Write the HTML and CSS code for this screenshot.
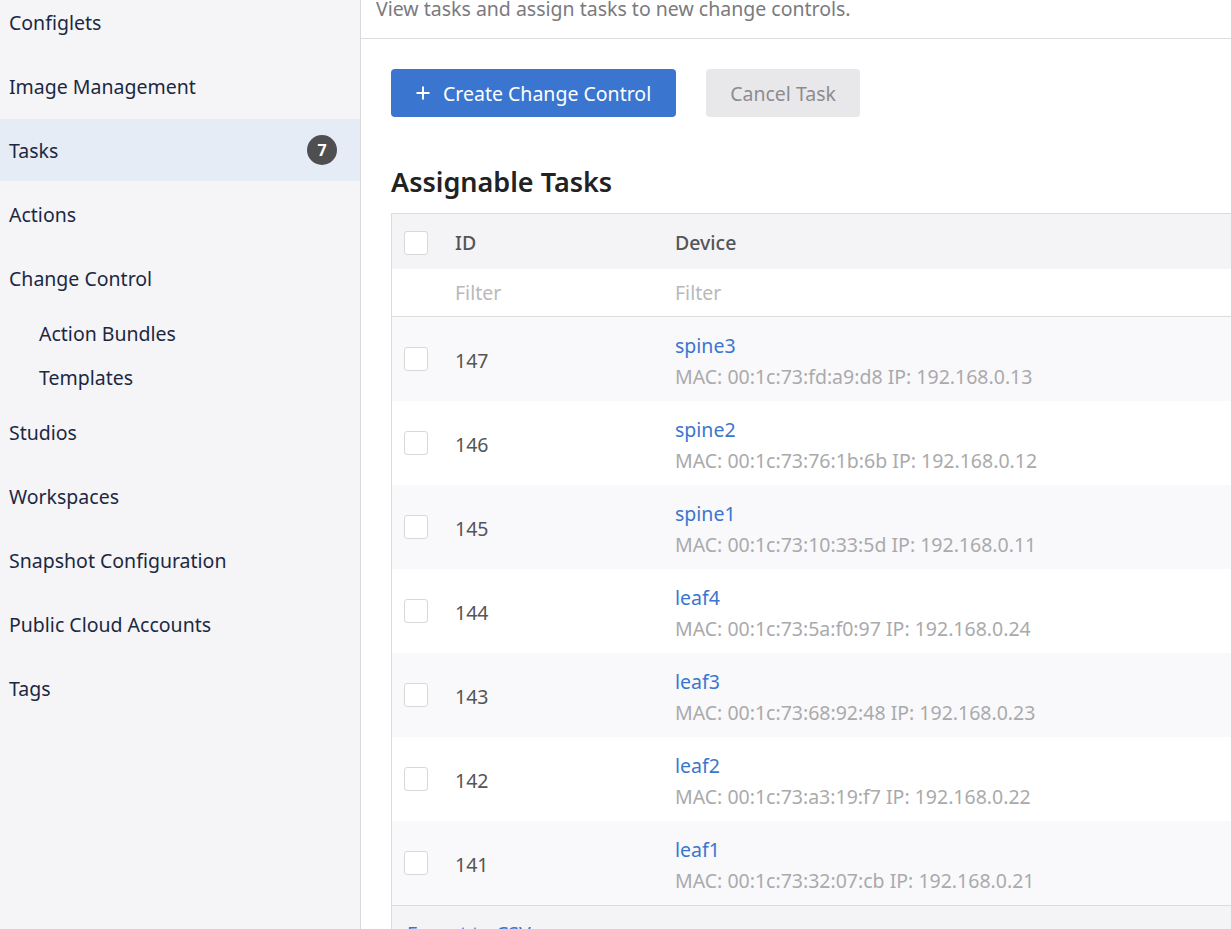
FILE: index.html
```html
<!DOCTYPE html>
<html>
<head>
<meta charset="utf-8">
<link rel="stylesheet" href="styles.css">
</head>
<body>
<div class="app">
  <nav class="sidebar">
    <ul class="nav">
      <li class="nav-item">Configlets</li>
      <li class="nav-item">Image Management</li>
      <li class="nav-item active"><span>Tasks</span><span class="badge">7</span></li>
      <li class="nav-item">Actions</li>
      <li class="nav-item">Change Control</li>
      <li class="nav-sub">Action Bundles</li>
      <li class="nav-sub">Templates</li>
      <li class="nav-item">Studios</li>
      <li class="nav-item">Workspaces</li>
      <li class="nav-item">Snapshot Configuration</li>
      <li class="nav-item">Public Cloud Accounts</li>
      <li class="nav-item">Tags</li>
    </ul>
  </nav>
  <main class="main">
    <div class="page-header">
      <p class="subtitle">View tasks and assign tasks to new change controls.</p>
    </div>
    <div class="content">
      <div class="actions">
        <button class="btn btn-primary"><svg class="plus" width="16" height="16" viewBox="0 0 16 16"><path d="M8 1.5v13M1.5 8h13" stroke="#fff" stroke-width="2" fill="none"/></svg>Create Change Control</button>
        <button class="btn btn-disabled">Cancel Task</button>
      </div>
      <h2 class="section-title">Assignable Tasks</h2>
      <div class="table">
        <div class="row head">
          <div class="cell check"><span class="box"></span></div>
          <div class="cell id">ID</div>
          <div class="cell device">Device</div>
        </div>
        <div class="row filter">
          <div class="cell check"></div>
          <div class="cell id">Filter</div>
          <div class="cell device">Filter</div>
        </div>
        <div class="row data odd">
          <div class="cell check"><span class="box"></span></div>
          <div class="cell id">147</div>
          <div class="cell device"><a class="dev-name">spine3</a><span class="dev-meta">MAC: 00:1c:73:fd:a9:d8 IP: 192.168.0.13</span></div>
        </div>
        <div class="row data">
          <div class="cell check"><span class="box"></span></div>
          <div class="cell id">146</div>
          <div class="cell device"><a class="dev-name">spine2</a><span class="dev-meta">MAC: 00:1c:73:76:1b:6b IP: 192.168.0.12</span></div>
        </div>
        <div class="row data odd">
          <div class="cell check"><span class="box"></span></div>
          <div class="cell id">145</div>
          <div class="cell device"><a class="dev-name">spine1</a><span class="dev-meta">MAC: 00:1c:73:10:33:5d IP: 192.168.0.11</span></div>
        </div>
        <div class="row data">
          <div class="cell check"><span class="box"></span></div>
          <div class="cell id">144</div>
          <div class="cell device"><a class="dev-name">leaf4</a><span class="dev-meta">MAC: 00:1c:73:5a:f0:97 IP: 192.168.0.24</span></div>
        </div>
        <div class="row data odd">
          <div class="cell check"><span class="box"></span></div>
          <div class="cell id">143</div>
          <div class="cell device"><a class="dev-name">leaf3</a><span class="dev-meta">MAC: 00:1c:73:68:92:48 IP: 192.168.0.23</span></div>
        </div>
        <div class="row data">
          <div class="cell check"><span class="box"></span></div>
          <div class="cell id">142</div>
          <div class="cell device"><a class="dev-name">leaf2</a><span class="dev-meta">MAC: 00:1c:73:a3:19:f7 IP: 192.168.0.22</span></div>
        </div>
        <div class="row data odd">
          <div class="cell check"><span class="box"></span></div>
          <div class="cell id">141</div>
          <div class="cell device"><a class="dev-name">leaf1</a><span class="dev-meta">MAC: 00:1c:73:32:07:cb IP: 192.168.0.21</span></div>
        </div>
        <div class="table-footer"><a class="export">Export to CSV</a></div>
      </div>
    </div>
  </main>
</div>
</body>
</html>
```

FILE: styles.css
```css
* { box-sizing: border-box; }
html, body { margin: 0; padding: 0; height: 100%; overflow: hidden; }
body {
  font-family: "Noto Sans", "Open Sans", sans-serif;
  font-size: 19.5px;
  color: #333;
  background: #fff;
}
.app { display: flex; height: 929px; }
.sidebar {
  width: 361px;
  flex: none;
  background: #f5f5f8;
  border-right: 1px solid #d9d9dc;
  overflow: hidden;
}
.nav { list-style: none; margin: -9px 0 0 0; padding: 0; }
.nav-item {
  height: 62px;
  margin-bottom: 2px;
  display: flex;
  align-items: center;
  justify-content: space-between;
  padding: 0 23px 0 9px;
  color: #1c2842;
}
.nav-item.active { background: #e6ecf6; }
.nav-sub {
  height: 44px;
  display: flex;
  align-items: center;
  padding-left: 39px;
  color: #1c2842;
}
.nav-sub + .nav-item { margin-top: 2px; }
.badge {
  width: 30px; height: 30px;
  border-radius: 50%;
  background: #4f4f52;
  color: #fff;
  font-weight: 700;
  font-size: 16px;
  display: flex; align-items: center; justify-content: center;
}
.main { flex: 1; min-width: 0; overflow: hidden; }
.page-header {
  display: flow-root;
  border-bottom: 1px solid #dcdcdf;
  height: 39px;
}
.subtitle { margin: -6px 0 0 15px; color: #7a7a7e; line-height: 30px; }
.content { padding: 30px 0 0 30px; }
.actions { display: flex; gap: 30px; }
.btn {
  font-family: inherit;
  font-size: 19.5px;
  height: 48px;
  border: none;
  border-radius: 4px;
  padding: 0 24px;
  display: flex; align-items: center;
}
.btn-primary { background: #3a76cf; color: #fff; padding-right: 25px; }
.btn-primary .plus { margin-right: 12px; }
.btn-disabled { background: #e8e8ea; color: #8c8c90; }
.section-title {
  margin: 48px 0 14px 0;
  font-size: 27px;
  line-height: 34px;
  font-weight: 600;
  color: #222;
}
.table {
  width: 1000px;
  border: 1px solid #dcdcdf;
  border-right: none;
}
.row { display: flex; align-items: center; }
.cell { flex: none; }
.check { width: 51px; padding-left: 12px; display: flex; align-items: center; }
.id { width: 220px; padding-left: 12px; }
.device { padding-left: 12px; display: flex; flex-direction: column; }
.data .id { padding-top: 2px; }
.data .device { padding-top: 6px; }
.box {
  width: 24px; height: 24px;
  background: #fff;
  border: 1px solid #d8d8db;
  border-radius: 3px;
  display: block;
}
.head { height: 55px; background: #f4f4f6; color: #555; font-weight: 500; padding-top: 2px; }
.filter { height: 48px; background: #fff; color: #b9b9bc; border-bottom: 1px solid #dcdcdf; }
.data { height: 84px; background: #fff; color: #555; }
.data.odd { background: #f9f9fb; }
.dev-name { color: #3a76cf; line-height: 30px; }
.dev-meta { color: #aaaaad; line-height: 32px; }
.table-footer {
  height: 60px;
  background: #f4f4f6;
  border-top: 1px solid #dcdcdf;
  padding: 14px 0 0 15px;
}
.export { color: #3a76cf; }
```
